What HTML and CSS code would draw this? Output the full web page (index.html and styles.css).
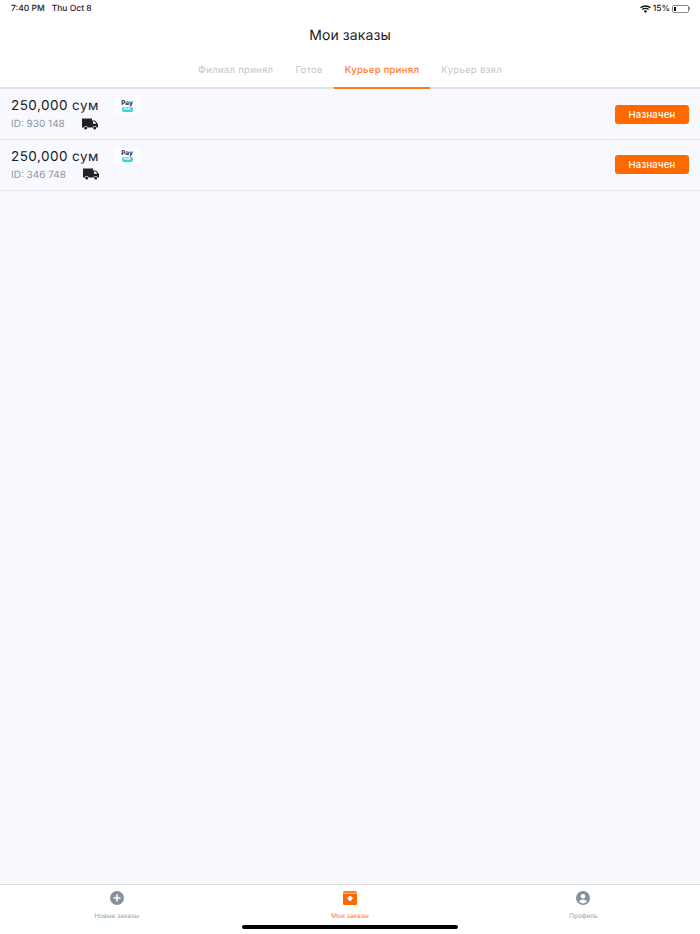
FILE: index.html
```html
<!DOCTYPE html>
<html lang="ru">
<head>
  <meta charset="UTF-8">
  <title>Мои заказы</title>
  <link rel="stylesheet" href="styles.css">
</head>
<body>
  <div class="app">
    <header class="top">
      <div class="status">
        <div class="status-time"><span>7:40 PM</span><span>Thu Oct 8</span></div>
        <div class="status-right">
          <svg class="wifi" width="11" height="8" viewBox="0 0 22 16">
            <path d="M11 16l-3.4-4.2a5.4 5.4 0 0 1 6.8 0z" fill="#111"/>
            <path d="M1 5.6a15.6 15.6 0 0 1 20 0M4.6 9.2a10.2 10.2 0 0 1 12.8 0" fill="none" stroke="#111" stroke-width="2.6"/>
          </svg>
          <span>15%</span>
          <div class="battery"><div class="battery-level"></div></div>
          <div class="battery-cap"></div>
        </div>
      </div>
      <h1 class="title">Мои заказы</h1>
      <nav class="tabs">
        <a class="tab">Филиал принял</a>
        <a class="tab">Готов</a>
        <a class="tab active">Курьер принял</a>
        <a class="tab">Курьер взял</a>
      </nav>
    </header>

    <main class="orders">
      <div class="order">
        <div class="order-info">
          <div class="order-sum">250,000 сум</div>
          <div class="order-id">ID: 930 148</div>
        </div>
        <div class="order-icons">
          <div class="payme"><span class="pay">Pay</span><span class="me">me</span></div>
          <svg class="truck" width="16" height="12" viewBox="0 0 16 12">
            <path d="M0 .5h10v2h3l3 3.4V9.5h-1.4a2 2 0 0 0-3.8 0H5.6a2 2 0 0 0-3.8 0H0z" fill="#222"/>
            <circle cx="3.7" cy="10" r="1.5" fill="#222"/><circle cx="12.7" cy="10" r="1.5" fill="#222"/>
            <path d="M11 3.6h1.6l1.8 2.2H11z" fill="#f8f9ff"/>
          </svg>
        </div>
        <button class="status-btn">Назначен</button>
      </div>
      <div class="order">
        <div class="order-info">
          <div class="order-sum">250,000 сум</div>
          <div class="order-id">ID: 346 748</div>
        </div>
        <div class="order-icons second">
          <div class="payme"><span class="pay">Pay</span><span class="me">me</span></div>
          <svg class="truck" width="16" height="12" viewBox="0 0 16 12">
            <path d="M0 .5h10v2h3l3 3.4V9.5h-1.4a2 2 0 0 0-3.8 0H5.6a2 2 0 0 0-3.8 0H0z" fill="#222"/>
            <circle cx="3.7" cy="10" r="1.5" fill="#222"/><circle cx="12.7" cy="10" r="1.5" fill="#222"/>
            <path d="M11 3.6h1.6l1.8 2.2H11z" fill="#f8f9ff"/>
          </svg>
        </div>
        <button class="status-btn">Назначен</button>
      </div>
    </main>

    <footer class="bottom">
      <a class="bottom-item">
        <svg width="14" height="14" viewBox="0 0 14 14">
          <circle cx="7" cy="7" r="7" fill="#87919c"/>
          <path d="M7 3.5v7M3.5 7h7" stroke="#fff" stroke-width="1.6"/>
        </svg>
        <span>Новые заказы</span>
      </a>
      <a class="bottom-item active">
        <svg width="14" height="14" viewBox="0 0 14 14">
          <path d="M1.5 0h11A1.5 1.5 0 0 1 14 1.5V2H0v-.5A1.5 1.5 0 0 1 1.5 0z" fill="#ff7f2a"/>
          <path d="M0 2.600h14v9.900a1.500 1.500 0 0 1-1.500 1.500h-11A1.500 1.500 0 0 1 0 12.500z" fill="#ff6a00"/>
          <path d="M5.600 5h2.800v1.800h2L7 10.400 3.600 6.800h2z" fill="#fff"/>
        </svg>
        <span>Мои заказы</span>
      </a>
      <a class="bottom-item">
        <svg width="14" height="14" viewBox="0 0 14 14">
          <circle cx="7" cy="7" r="7" fill="#87919c"/>
          <circle cx="7" cy="5.200" r="2.300" fill="#fff"/>
          <path d="M2.900 10.600c.8-1.500 2.400-2.200 4.100-2.200s3.300.7 4.100 2.200A5.300 5.300 0 0 1 7 12.400a5.300 5.300 0 0 1-4.100-1.800z" fill="#fff"/>
        </svg>
        <span>Профиль</span>
      </a>
      <div class="home-bar"></div>
    </footer>
  </div>
</body>
</html>
```

FILE: styles.css
```css
:root {
  --bg-color: #f8f9ff;
  --orange: #ff6a00;
  --line: #e4e6ea;
  --grey: #87919c;
}

* {
  box-sizing: border-box;
}

html, body {
  height: 100%;
}

body {
  margin: 0;
  font-family: Inter, "Noto Sans", sans-serif;
  color: #1c1c22;
  background: var(--bg-color);
  text-rendering: geometricPrecision;
}

.app {
  display: flex;
  flex-direction: column;
  height: 934px;
  overflow: hidden;
}

.top {
  background: #fff;
  border-bottom: 2px solid #dfe1e5;
}

.status {
  display: flex;
  justify-content: space-between;
  align-items: center;
  height: 16px;
  padding: 1px 10px 0 11px;
  font-size: 8.5px;
  font-weight: 500;
}

.status-time {
  display: flex;
  gap: 7px;
}

.status-right {
  display: flex;
  align-items: center;
}

.wifi {
  margin-right: 2px;
}

.battery {
  width: 17px;
  height: 8px;
  margin-left: 2px;
  padding: 1px;
  border: 1px solid #8a8a8a;
  border-radius: 2px;
}

.battery-level {
  width: 2px;
  height: 100%;
  background: #111;
}

.battery-cap {
  width: 1px;
  height: 3px;
  background: #8a8a8a;
}

.title {
  margin: 11px 0 0;
  font-size: 14px;
  line-height: 18px;
  font-weight: 400;
  letter-spacing: 0.1px;
  text-align: center;
}

.tabs {
  display: flex;
  justify-content: center;
  margin-top: 14px;
}

.tab {
  height: 30px;
  padding: 5px 11px 0;
  font-size: 9.5px;
  line-height: 14px;
  font-weight: 400;
  letter-spacing: 0.3px;
  color: #c4c6c9;
  border-bottom: 2px solid transparent;
  margin-bottom: -2px;
}

.tab.active {
  font-weight: 500;
  color: #ff7a1f;
  border-bottom-color: #ff7a1f;
}

.orders {
  flex: 1;
  padding-top: 0.5px;
}

.order {
  display: flex;
  align-items: center;
  height: 50.5px;
  padding: 0 11px;
  border-bottom: 1.5px solid var(--line);
}

.order-info {
  width: 71px;
  white-space: nowrap;
}

.order-sum {
  font-size: 13.5px;
  line-height: 18px;
  letter-spacing: 0.45px;
}

.order-id {
  margin-top: 2px;
  font-size: 10px;
  line-height: 14px;
  color: #8d97a3;
}

.order-icons {
  position: relative;
  flex: 1;
  align-self: stretch;
}

.payme {
  position: absolute;
  left: 32px;
  top: 8px;
  display: flex;
  flex-direction: column;
  align-items: center;
  width: 26px;
  height: 16px;
  padding-top: 2px;
  border-radius: 3px;
  background: #fdfdff;
  font-weight: 700;
}

.payme .pay {
  font-size: 6.5px;
  line-height: 7px;
}

.payme .me {
  width: 11px;
  height: 5px;
  font-size: 4.5px;
  line-height: 5px;
  text-align: center;
  color: #fff;
  background: #3fd0d4;
  border-radius: 2px;
}

.truck {
  position: absolute;
  left: 0;
  top: 28px;
}

.second .truck {
  left: 1px;
}

.status-btn {
  width: 74px;
  height: 19px;
  padding: 0;
  border: none;
  border-radius: 3px;
  background: var(--orange);
  color: #fff;
  font-family: inherit;
  font-size: 9.5px;
  font-weight: 500;
  letter-spacing: 0.2px;
}

.bottom {
  position: relative;
  display: grid;
  grid-template-columns: repeat(3, 1fr);
  height: 50px;
  background: #fff;
  border-top: 1px solid #dcdee2;
}

.bottom-item {
  display: flex;
  flex-direction: column;
  align-items: center;
  padding-top: 6px;
  font-size: 6.5px;
  line-height: 10px;
  color: #9aa2ac;
}

.bottom-item span {
  margin-top: 6px;
}

.bottom-item.active {
  color: #ff7a1f;
}

/* ios home indicator */
.home-bar {
  position: absolute;
  left: 242px;
  bottom: 5px;
  width: 216px;
  height: 4px;
  border-radius: 2px;
  background: #000;
}
```
